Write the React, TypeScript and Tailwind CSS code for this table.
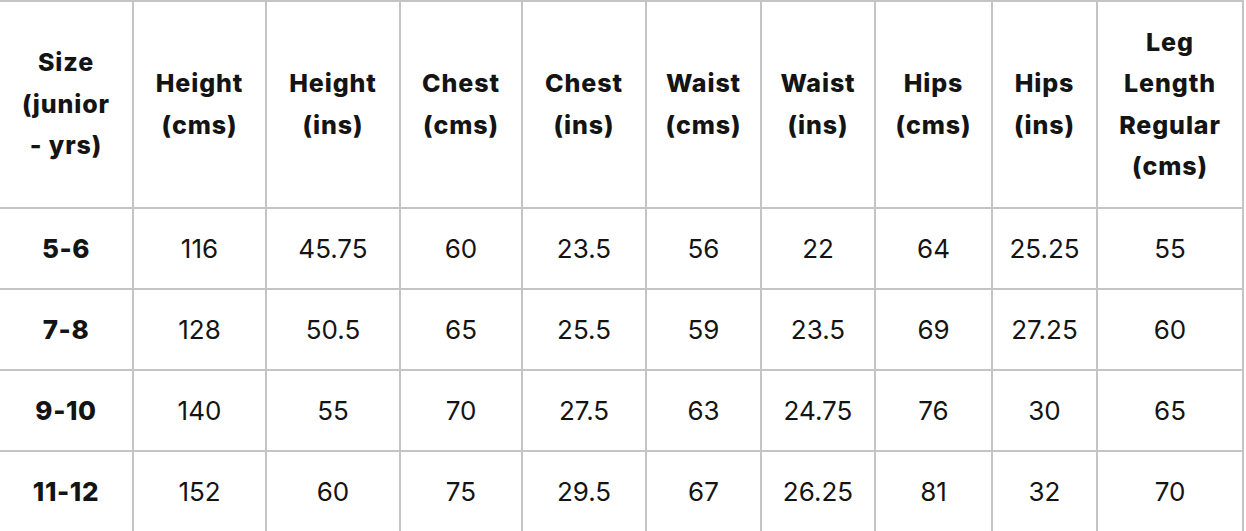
import React from "react";

const widths = "grid-cols-[134px_133px_134px_122px_124px_115px_114px_117px_105px_146px]";

const headers: string[][] = [
  ["Size", "(junior", "- yrs)"],
  ["Height", "(cms)"],
  ["Height", "(ins)"],
  ["Chest", "(cms)"],
  ["Chest", "(ins)"],
  ["Waist", "(cms)"],
  ["Waist", "(ins)"],
  ["Hips", "(cms)"],
  ["Hips", "(ins)"],
  ["Leg", "Length", "Regular", "(cms)"],
];

const rows: string[][] = [
  ["5-6", "116", "45.75", "60", "23.5", "56", "22", "64", "25.25", "55"],
  ["7-8", "128", "50.5", "65", "25.5", "59", "23.5", "69", "27.25", "60"],
  ["9-10", "140", "55", "70", "27.5", "63", "24.75", "76", "30", "65"],
  ["11-12", "152", "60", "75", "29.5", "67", "26.25", "81", "32", "70"],
];

export default function App() {
  return (
    <div
      className="w-[1246px] h-[531px] overflow-hidden bg-white text-[#141414]"
      style={{ fontFamily: "Inter, 'Liberation Sans', sans-serif" }}
    >
      <div className={`grid ${widths} w-[1244px] border-t-2 border-[#c4c4c4]`}>
        {headers.map((h, i) => (
          <div
            key={"h" + i}
            className="h-[207px] flex flex-col items-center justify-center text-center border-r-2 border-b-2 border-[#c4c4c4] text-[25px] leading-[41.5px] font-extrabold tracking-[0.9px]"
          >
            {h.map((l, j) => (
              <span key={j}>{l}</span>
            ))}
          </div>
        ))}
        {rows.map((r, ri) =>
          r.map((c, ci) => (
            <div
              key={ri + "-" + ci}
              className={`h-[81px] flex items-center justify-center border-r-2 border-b-2 border-[#c4c4c4] text-[26px] ${
                ci === 0 ? "font-extrabold tracking-[0.6px]" : "font-normal"
              }`}
            >
              {c}
            </div>
          ))
        )}
      </div>
    </div>
  );
}
